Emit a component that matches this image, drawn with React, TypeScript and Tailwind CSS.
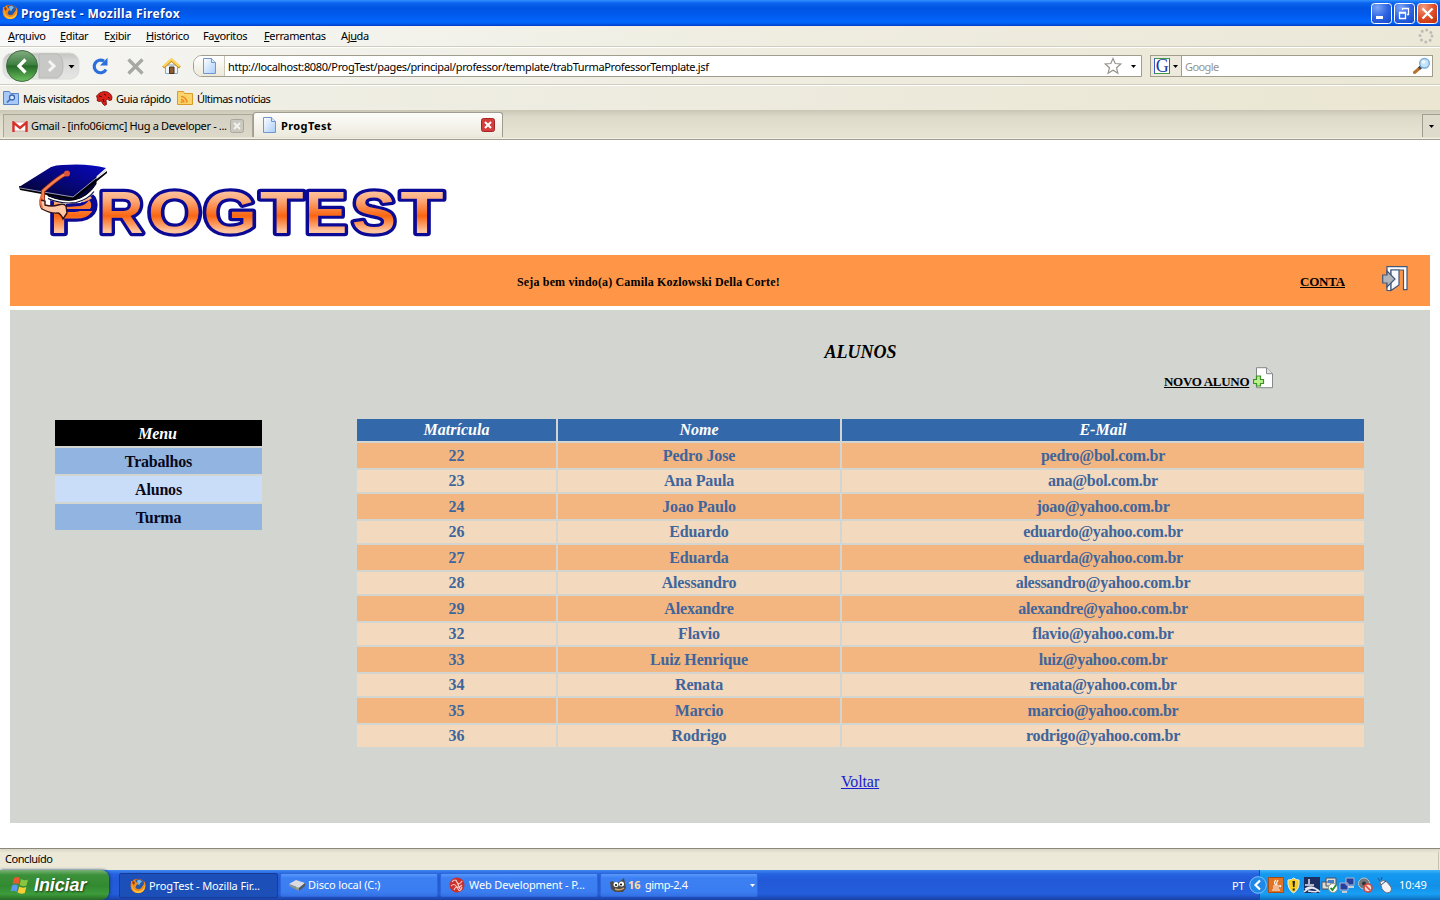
import React from 'react';

const students: [string, string, string][] = [
  ['22', 'Pedro Jose', 'pedro@bol.com.br'],
  ['23', 'Ana Paula', 'ana@bol.com.br'],
  ['24', 'Joao Paulo', 'joao@yahoo.com.br'],
  ['26', 'Eduardo', 'eduardo@yahoo.com.br'],
  ['27', 'Eduarda', 'eduarda@yahoo.com.br'],
  ['28', 'Alessandro', 'alessandro@yahoo.com.br'],
  ['29', 'Alexandre', 'alexandre@yahoo.com.br'],
  ['32', 'Flavio', 'flavio@yahoo.com.br'],
  ['33', 'Luiz Henrique', 'luiz@yahoo.com.br'],
  ['34', 'Renata', 'renata@yahoo.com.br'],
  ['35', 'Marcio', 'marcio@yahoo.com.br'],
  ['36', 'Rodrigo', 'rodrigo@yahoo.com.br'],
];

// Letter, left and right ink bounds in font units, then left and right edge in the logo.
const letters: [string, number, number, number, number][] = [
  ['P', 149, 1296, 54.5, 94],
  ['R', 150, 1467, 103, 143],
  ['O', 89, 1505, 151, 198.5],
  ['G', 89, 1466, 206.5, 252.5],
  ['T', 43, 1207, 261.5, 302],
  ['E', 149, 1275, 309.5, 344.5],
  ['S', 74, 1286, 354.5, 393.5],
  ['T', 43, 1207, 402, 442],
];

function Firefox() {
  return (
    <svg width="16" height="16" viewBox="0 0 16 16" className="shrink-0">
      <circle cx="8" cy="8" r="7.3" fill="#d95f0e" />
      <circle cx="8.8" cy="6.5" r="5.2" fill="#2459a8" />
      <path d="M7 2.5l3-.8 2 2-2 1.5-.5 2L7.500 6z" fill="#75b9e8" />
      <path d="M1 3l2 .3L4.500 1 6 4l2.500 1.500-2 1.500-1 2.500c1.500 2.500 5 2 6 0L14 6l.5-3c2 4 1 9-3 11.300C7 16.500 1 14 .7 8z" fill="#f58a1c" />
      <path d="M3 6c-1.500 4 2 8 6.500 7 3-.7 4.800-2.500 5.200-6 .8 5-2 7.800-6 8C3.500 15 .8 10 3 6z" fill="#fbc53b" />
      <path d="M2 4l1.500-1L5 5 3.500 7z" fill="#93390b" />
    </svg>
  );
}

function Page() {
  return (
    <svg width="13" height="16" viewBox="0 0 13 16" className="shrink-0">
      <defs>
        <linearGradient id="sheet" x2="1" y2="1">
          <stop stopColor="#fff" />
          <stop offset="1" stopColor="#a9cdfa" />
        </linearGradient>
      </defs>
      <path d="M.5.500h8l4 4v11H.500z" fill="url(#sheet)" stroke="#6f96cf" />
      <path d="M8.500.500v4h4" fill="#d5e6fb" stroke="#6f96cf" />
    </svg>
  );
}

function Caret({ white = false }: { white?: boolean }) {
  return (
    <svg width="5" height="3" viewBox="0 0 5 3" className="shrink-0">
      <path d="M0 0h5L2.500 3z" fill={white ? '#fff' : '#000'} />
    </svg>
  );
}

function TitleBar() {
  return (
    <div className="flex h-[26px] items-center bg-[linear-gradient(#3290ff_0,#0a64ee_3px,#0055e2_8px,#0058ec_14px,#0268ff_22px,#0059e8_24px,#003ac4_26px)] pl-[2px] pr-[2px]">
      <div className="-mt-[3px]"><Firefox /></div>
      <span className="ml-[3px] mt-px font-['Noto_Sans'] text-[12px] font-bold tracking-[0.38px] text-white [text-shadow:1px_1px_#0a2d86]">ProgTest - Mozilla Firefox</span>
      <div className="ml-auto flex gap-[2px]">
        <svg width="21" height="21" viewBox="0 0 21 21">
          <defs>
            <radialGradient id="blueBtn" cx=".3" cy=".2" r="1">
              <stop stopColor="#7ba5f6" /><stop offset=".5" stopColor="#2f66e4" /><stop offset="1" stopColor="#1448ca" />
            </radialGradient>
            <radialGradient id="redBtn" cx=".3" cy=".2" r="1">
              <stop stopColor="#f29a80" /><stop offset=".5" stopColor="#e0512b" /><stop offset="1" stopColor="#bd2e08" />
            </radialGradient>
          </defs>
          <rect x=".5" y=".5" width="20" height="20" rx="3" fill="url(#blueBtn)" stroke="#fff" />
          <path d="M5 13h7v3H5z" fill="#fff" />
        </svg>
        <svg width="21" height="21" viewBox="0 0 21 21">
          <rect x=".5" y=".5" width="20" height="20" rx="3" fill="url(#blueBtn)" stroke="#fff" />
          <path d="M8.500 7V5.500h6v6H13M8 5.500h7M5.500 9.500h6v6h-6zM5 10h7" fill="none" stroke="#fff" strokeWidth="1.300" />
        </svg>
        <svg width="21" height="21" viewBox="0 0 21 21">
          <rect x=".5" y=".5" width="20" height="20" rx="3" fill="url(#redBtn)" stroke="#fff" />
          <path d="M5.500 5.500l10 10m0-10l-10 10" stroke="#fff" strokeWidth="2.300" />
        </svg>
      </div>
    </div>
  );
}

function MenuBar() {
  return (
    <div className="flex h-[21px] items-center border-b border-[#d0cdbf] bg-[linear-gradient(90deg,#f7f8f8,#efede0_55%,#ebe8d8)] pl-[8px] pr-[6px] tracking-[-0.36px]">
      <span className="w-[52px]"><u>A</u>rquivo</span>
      <span className="w-[44px]"><u>E</u>ditar</span>
      <span className="w-[42px]">E<u>x</u>ibir</span>
      <span className="w-[57px]"><u>H</u>istórico</span>
      <span className="w-[61px]">Fa<u>v</u>oritos</span>
      <span className="w-[77px]"><u>F</u>erramentas</span>
      <span>Aj<u>u</u>da</span>
      <svg width="16" height="16" viewBox="0 0 16 16" className="ml-auto">
        <circle cx="8" cy="8" r="6" fill="none" stroke="#bdbbb3" strokeWidth="3" strokeDasharray="0 4.712" strokeLinecap="round" />
      </svg>
    </div>
  );
}

function NavBar() {
  return (
    <div className="flex h-[38px] items-center border-b border-t border-b-[#d0cdbf] border-t-white bg-[linear-gradient(90deg,#f5f5f3,#efede1_50%,#ebe7d5)]">
      <svg width="80" height="34" viewBox="0 0 80 34" className="ml-[2px] shrink-0">
        <defs>
          <linearGradient id="pill" x2="0" y2="1"><stop stopColor="#c2c2c0" /><stop offset=".3" stopColor="#d7d7d5" /><stop offset="1" stopColor="#e6e6e4" /></linearGradient>
          <linearGradient id="green" x2="0" y2="1"><stop stopColor="#84ad82" /><stop offset=".45" stopColor="#3f8142" /><stop offset=".5" stopColor="#256b28" /><stop offset="1" stopColor="#6cc15f" /></linearGradient>
        </defs>
        <rect x="1" y="4" width="76" height="26" rx="9" fill="url(#pill)" stroke="#dcdcd8" />
        <path d="M37 5h18q6 2 6 12t-6 12H37z" fill="#c8c8c6" stroke="#b8b8b6" />
        <path d="M47 12l5 5-5 5" fill="none" stroke="#f4f4f4" strokeWidth="3" />
        <path d="M66.500 16h6l-3 3.500z" />
        <circle cx="20" cy="17" r="15.500" fill="url(#green)" stroke="#426c43" />
        <path d="M23.500 10.500L17 17l6.500 6.500" fill="none" stroke="#fff" strokeWidth="3.200" />
      </svg>
      <svg width="18" height="18" viewBox="0 0 18 18" className="ml-[9px] shrink-0">
        <path d="M15 12.500A6.300 6.300 0 1 1 13 4.200" fill="none" stroke="#2a6fdb" strokeWidth="3.200" />
        <path d="M16.500.800v7.700H9z" fill="#2a6fdb" />
      </svg>
      <svg width="17" height="17" viewBox="0 0 17 17" className="ml-[18px] shrink-0">
        <path d="M1.500 1.500l14 14M15.500 1.500l-14 14" stroke="#a7a7a4" strokeWidth="3.200" />
      </svg>
      <svg width="19" height="18" viewBox="0 0 19 18" className="ml-[18px] shrink-0">
        <path d="M3.500 8h12v8.500h-12z" fill="#eef4fb" stroke="#8fa6c4" />
        <path d="M7.500 10h4.500v6.500H7.500z" fill="#8d5a32" stroke="#4d3220" />
        <path d="M1.200 10.500L9.500 3l8.300 7.500" fill="none" stroke="#c98c1c" strokeWidth="3" />
        <path d="M1.500 9.500L9.500 2.300 17.500 9.500" fill="none" stroke="#ffd760" strokeWidth="2.200" />
      </svg>
      <div className="ml-[12px] flex h-[22px] w-[949px] items-center rounded-l-[9px] border border-[#a09d8e] bg-white">
        <div className="flex h-full w-[31px] items-center rounded-l-[8px] border-r border-[#c9c6b6] bg-[linear-gradient(#fff,#ece9da)] pl-[9px]"><Page /></div>
        <span className="ml-[3px] mt-px tracking-[-0.363px]">http://localhost:8080/ProgTest/pages/principal/professor/template/trabTurmaProfessorTemplate.jsf</span>
        <svg width="18" height="18" viewBox="0 0 18 18" className="ml-auto shrink-0">
          <path d="M9 1.500l2.200 5 5.600.5-4.300 3.700 1.400 5.500L9 13.300l-4.900 2.900 1.400-5.500L1.200 7l5.600-.5z" fill="#fff" stroke="#96938c" strokeWidth="1.200" />
        </svg>
        <div className="ml-[9px] mr-[5px]"><Caret /></div>
      </div>
      <div className="ml-[8px] flex h-[22px] w-[283px] items-center border border-[#a09d8e] bg-white">
        <div className="flex h-full w-[31px] items-center gap-[3px] border-r border-[#a09d8e] bg-[#edeadd] pl-[3px]">
          <div className="flex h-[16px] w-[16px] shrink-0 items-center justify-center border border-b-[#3b9c45] border-l-[#3a59c9] border-r-[#c4342c] border-t-[#3b9c45] bg-white font-['Liberation_Serif'] text-[18px] leading-none text-[#1a3ba5]">G</div>
          <Caret />
        </div>
        <span className="ml-[3px] mt-px tracking-[-0.6px] text-[#96948c]">Google</span>
        <svg width="18" height="18" viewBox="0 0 18 18" className="ml-auto mr-[1px]">
          <path d="M1.500 15.500L8 10" stroke="#b87230" strokeWidth="3" strokeLinecap="round" />
          <path d="M6 11.500l2-1.700" stroke="#40464f" strokeWidth="3" />
          <circle cx="11.500" cy="6.300" r="4.800" fill="#c4e4fb" stroke="#7badd6" strokeWidth="1.500" />
          <circle cx="10.500" cy="5" r="1.800" fill="#f2faff" />
        </svg>
      </div>
    </div>
  );
}

function Bookmarks() {
  return (
    <div className="flex h-[25px] items-center border-t border-white bg-[linear-gradient(90deg,#f1f0e8,#edebde_50%,#eae6d2)] pl-[3px] tracking-[-0.46px]">
      <svg width="16" height="14" viewBox="0 0 16 14">
        <path d="M.5.500h6l1 2h8v11H.500z" fill="#a8c9f7" stroke="#5b84c8" />
        <circle cx="9" cy="6.500" r="2.500" fill="#dcebfd" stroke="#3c68b4" strokeWidth="1.300" />
        <path d="M7 8.500l-3 3" stroke="#3c68b4" strokeWidth="1.600" />
      </svg>
      <span className="ml-[4px] mt-[2px] w-[73px]">Mais visitados</span>
      <svg width="17" height="15" viewBox="0 0 17 15">
        <path d="M.5 5l3-3 4-1.500 4 .5 3 2 1.500 3-.5 3-2.500.5-1.500-1.500-1.500 1.500.5 4-2 1-2-2-1-2.500-2.500.5-2-1L1.500 8z" fill="#d81f18" stroke="#6b0a08" strokeWidth=".8" />
        <path d="M3 5l2.500.5M8 3l2 1.500M7 8l1 3M12 6l1.500 1.500" stroke="#3b0504" />
      </svg>
      <span className="ml-[3px] mt-[2px] w-[61px] tracking-[-0.5px]">Guia rápido</span>
      <svg width="16" height="14" viewBox="0 0 16 14">
        <path d="M.5.500h6l1 2h8v11H.500z" fill="#fbd36b" stroke="#d99c28" />
        <path d="M4 5.500q5 0 6 6M4 8.500q2.500 0 3 3" fill="none" stroke="#f08a1c" strokeWidth="1.600" />
        <circle cx="4.700" cy="11" r="1" fill="#f08a1c" />
      </svg>
      <span className="ml-[4px] mt-[2px] tracking-[-0.55px]">Últimas notícias</span>
    </div>
  );
}

function Tabs() {
  return (
    <div className="flex h-[30px] items-end border-b border-[#a09d90] bg-[linear-gradient(#c9c6b5,#dddac9_7px,#e6e3d3_24px,#e6e3d3)]">
      <div className="flex h-full grow items-end border-b border-[#f1efe6] pb-px pl-[3px]">
        <div className="flex h-[23px] w-[250px] items-center border border-b-0 border-[#a9a698] bg-[linear-gradient(#d3d0c1,#dcd9ca)] pl-[8px] pr-[8px]">
          <svg width="16" height="11" viewBox="0 0 16 11">
            <path d="M1 1h14v9H1z" fill="#fff" stroke="#d9aaa5" />
            <path d="M1.500 11V1.500L8 7l6.500-5.500V11" fill="none" stroke="#d6322b" strokeWidth="2.400" />
          </svg>
          <span className="ml-[3px] tracking-[-0.35px]">Gmail - [info06icmc] Hug a Developer - ...</span>
          <svg width="14" height="14" viewBox="0 0 14 14" className="ml-auto shrink-0">
            <rect x=".5" y=".5" width="13" height="13" rx="2" fill="#cbc9bf" stroke="#aaa89e" />
            <path d="M4 4l6 6m0-6l-6 6" stroke="#f4f3ee" strokeWidth="1.800" />
          </svg>
        </div>
        <div className="flex h-[25px] w-[250px] items-center rounded-t-[3px] border border-b-0 border-[#a09d90] bg-[linear-gradient(#fdfdfb,#ece9dc)] pl-[9px] pr-[7px]">
          <Page />
          <span className="ml-[5px] mt-px text-[11px] font-bold tracking-[0.4px]">ProgTest</span>
          <svg width="14" height="14" viewBox="0 0 14 14" className="ml-auto">
            <rect x=".5" y=".5" width="13" height="13" rx="2" fill="#d53c3c" stroke="#a32525" />
            <path d="M4 4l6 6m0-6l-6 6" stroke="#fff" strokeWidth="2" />
          </svg>
        </div>
        <div className="ml-auto flex h-[23px] w-[18px] items-center justify-center border border-b-0 border-r-0 border-[#a09d90] bg-[#dedbcd]"><Caret /></div>
      </div>
    </div>
  );
}

function Logo() {
  const size = 59.6;
  const unit = size / 2048;
  return (
    <svg width="480" height="112" viewBox="0 140 480 112" className="block">
      <defs>
        <linearGradient id="ink" gradientUnits="userSpaceOnUse" x1="0" x2="0" y1="-42" y2="0">
          <stop stopColor="#ffc4a0" />
          <stop offset=".25" stopColor="#fca674" />
          <stop offset=".6" stopColor="#fa6511" />
          <stop offset=".95" stopColor="#ffc29a" />
        </linearGradient>
        <linearGradient id="cap" x1="0" y1="1" x2="1" y2="0">
          <stop stopColor="#020220" /><stop offset=".4" stopColor="#06066a" /><stop offset="1" stopColor="#0808c4" />
        </linearGradient>
      </defs>
      {letters.map(([ch, l, r, x1, x2], i) => {
        const s = (x2 - x1) / ((r - l) * unit);
        return (
          <text key={i} transform={`translate(${x1 - l * unit * s} 232.700) scale(${s} 1)`} fontFamily="Liberation Sans" fontSize={size} fontWeight="700" fill="url(#ink)" stroke="#0a0a95" strokeWidth="6.400" strokeLinejoin="round" paintOrder="stroke">{ch}</text>
        );
      })}
      <path d="M48 186l50-8v10l-3 5-16 11-14 1-18-6z" fill="#fff" />
      <path d="M66 204q8-1 15-1 8-2 14-7l2 6-4 9H66z" fill="#0a0a95" />
      <path d="M66 207l14-1q6-1 9-6 4 4 1 9H66z" fill="#fb7a30" />
      <path d="M48 196q14 6 26 4 14-3 22-16v-8l-48 12z" fill="#05053c" stroke="#000" />
      <path d="M48 197q14 6 28 4 12-3 18-11" fill="none" stroke="#fff" strokeWidth=".9" />
      <path d="M48 198.500q14 6 28 4 12-3 18-11" fill="none" stroke="#0a0a30" strokeWidth="1.200" />
      <path d="M20 190l54 10 33-27v-2l-34 26-54-11z" fill="#000" />
      <path d="M19 187L51 167q5-2 11-2 26-2 44 3L73 197q-27-3-54-10z" fill="url(#cap)" />
      <path d="M20 188l53 9 33-27" fill="none" stroke="#b8b8dc" strokeWidth=".8" />
      <path d="M66 174q-6 2-23 17v9" fill="none" stroke="#8d250e" strokeWidth="4" />
      <path d="M66 174q-6 2-23 17v9" fill="none" stroke="#f68255" strokeWidth="2.400" />
      <circle cx="67" cy="173.500" r="3" fill="#de5537" />
      <path d="M41 200l4 1v4q7 2 13 0 6-2 8 1l1 7-4 6q-2-5-5-6-7 1-16-4-3-4-1-9z" fill="#ffc7a5" stroke="#311" strokeWidth="1.400" />
      <path d="M42 194l-2 7 2 7" fill="none" stroke="#e86b3e" strokeWidth="2" />
    </svg>
  );
}

function Sidebar() {
  return (
    <div className="ml-[45px] mt-[110px] flex w-[207px] flex-col gap-[2px] text-center text-[16px] font-bold leading-[27px] tracking-[-0.2px] text-[#08081c]">
      <div className="h-[26px] bg-black pr-[2px] italic text-white">Menu</div>
      <div className="h-[26px] bg-[#91b4e1]">Trabalhos</div>
      <div className="h-[26px] bg-[#c9ddf8]">Alunos</div>
      <div className="h-[26px] bg-[#91b4e1]">Turma</div>
    </div>
  );
}

function StudentTable() {
  return (
    <div className="mt-[28px] flex flex-col gap-[2px] text-center text-[16px] font-bold text-[#3e659c]">
      <div className="grid h-[22px] grid-cols-[199px_282px_522px] gap-[2px] italic leading-[22px] text-white">
        <div className="bg-[#3368aa]">Matrícula</div>
        <div className="bg-[#3368aa]">Nome</div>
        <div className="bg-[#3368aa]">E-Mail</div>
      </div>
      {students.map(([id, name, mail], i) => {
        const bg = i % 2 ? 'bg-[#f3d9bd]' : 'bg-[#f4b680]';
        return (
          <div key={id} className={i % 2 ? 'grid h-[22px] grid-cols-[199px_282px_522px] gap-[2px] leading-[22px]' : 'grid h-[25px] grid-cols-[199px_282px_522px] gap-[2px] leading-[25px]'}>
            <div className={bg}>{id}</div>
            <div className={`${bg} tracking-[-0.15px]`}>{name}</div>
            <div className={`${bg} tracking-[-0.27px]`}>{mail}</div>
          </div>
        );
      })}
    </div>
  );
}

function Site() {
  return (
    <div className="h-[708px] bg-white font-['Liberation_Serif'] text-black">
      <div className="h-[115px]"><Logo /></div>
      <div className="ml-[10px] flex h-[51px] w-[1420px] items-center bg-[#ff9547] text-[12px] font-bold">
        <span className="ml-[507px] mt-[2px] w-[783px] tracking-[0.16px]">Seja bem vindo(a) Camila Kozlowski Della Corte!</span>
        <span className="mt-[2px] w-[82px] text-[13px] tracking-[-0.2px]"><u>CONTA</u></span>
        <svg width="26" height="26" viewBox="0 0 26 26" className="-mt-[4px]">
          <path d="M5 .700h20v23h-3.500V4H9v20.500H5z" fill="#fff" stroke="#41577b" strokeWidth="1.200" />
          <path d="M9 4h8v15l-8 5.500z" fill="#f8fafe" stroke="#41577b" strokeWidth="1.200" />
          <path d="M.700 9H5V5l8 8L5 21v-4H.700z" fill="#b1b5ba" stroke="#41577b" strokeWidth="1.200" />
        </svg>
      </div>
      <div className="ml-[10px] mt-[4px] flex h-[513px] w-[1420px] bg-[#d3d5d1]">
        <Sidebar />
        <div className="ml-[95px] w-[1007px]">
          <div className="mt-[32px] text-center text-[18px] font-bold italic leading-[20px]">ALUNOS</div>
          <div className="mt-[5px] flex h-[24px] items-center pl-[807px] text-[13px] font-bold">
            <span className="mt-[5px] w-[89px] whitespace-nowrap tracking-[-0.3px]"><u>NOVO ALUNO</u></span>
            <svg width="21" height="22" viewBox="0 0 21 22" className="-mt-[2px]">
              <path d="M3.500.700H13.500l6 6v14h-16z" fill="#fff" stroke="#85878a" />
              <path d="M13.500.700v6h6" fill="#e3e3e3" stroke="#85878a" />
              <path d="M3.500 9h4v3.500h3v4h-3V19h-4v-2.500h-3v-4h3z" fill="#b8f08a" stroke="#3d8f27" strokeWidth="1.200" />
            </svg>
          </div>
          <StudentTable />
          <div className="mt-[25px] pr-px text-center text-[16px] leading-[20px] tracking-[-0.1px] text-[#1c1ccd] underline">Voltar</div>
        </div>
      </div>
    </div>
  );
}

const taskClass = 'flex h-[24px] w-[158px] items-center rounded-[2px] border border-[#2f67d8] bg-[linear-gradient(#5a98fb,#3c80f4_4px,#3a7df0_18px,#3471e4)] px-[8px] text-white';

function Taskbar() {
  return (
    <div className="flex h-[30px] bg-[linear-gradient(#3d87f0_0,#2663e0_4px,#2259d8_10px,#245edb_24px,#1941a5)] tracking-[-0.12px] text-white">
      <div className="flex h-full w-[109px] items-center rounded-r-[8px] bg-[linear-gradient(#7ab277_0,#3b9139_5px,#328a31_16px,#3d9c3b_24px,#256a26)] pl-[10px] shadow-[1px_0_3px_#123b70]">
        <svg width="20" height="19" viewBox="0 0 20 19">
          <path d="M4 2q4-2 6 .5L8.500 8.500Q6 6.500 2.500 8z" fill="#ea5a2c" />
          <path d="M11 3q3 2 7 .5l-1.500 6Q13 11 9.500 9z" fill="#89c540" />
          <path d="M2 9.500q4-2 6 .5l-1.500 6Q4 14 .500 15.500z" fill="#5b98ee" />
          <path d="M9.300 10.500q3 2 7 .5l-1.500 6Q11 18.500 7.500 16.500z" fill="#f8cf36" />
        </svg>
        <span className="ml-[4px] font-['Liberation_Sans'] text-[18px] font-bold italic leading-none tracking-[-0.1px] [text-shadow:1px_1px_2px_#173d17]">Iniciar</span>
      </div>
      <div className="ml-[10px] mt-[3px] flex gap-[2px]">
        <div className="flex h-[25px] w-[159px] items-center rounded-[2px] border border-[#163c98] bg-[#1c4fb8] pl-[10px]">
          <Firefox />
          <span className="ml-[3px]">ProgTest - Mozilla Fir...</span>
        </div>
        <div className={taskClass}>
          <svg width="16" height="12" viewBox="0 0 16 12">
            <path d="M0 5l7-4 9 3-6 5z" fill="#d9dbdf" /><path d="M0 5l10 4v3L0 7z" fill="#8d9094" /><path d="M10 9l6-5v3l-6 5z" fill="#53575d" /><circle cx="8" cy="8.800" r=".8" fill="#77e66b" />
          </svg>
          <span className="ml-[3px]">Disco local (C:)</span>
        </div>
        <div className={taskClass}>
          <svg width="16" height="16" viewBox="0 0 16 16">
            <circle cx="8" cy="8" r="7.500" fill="#cc2f2b" />
            <path d="M3 5q3-4 5 0t5-1M2 9q3-3 5 0t6-1M5 13q2-5 4-1t4-2M7 3l4 9" fill="none" stroke="#f8c7c2" strokeWidth="1.200" />
          </svg>
          <span className="ml-[4px]">Web Development - P...</span>
        </div>
        <div className={taskClass}>
          <svg width="18" height="15" viewBox="0 0 18 15" className="shrink-0">
            <path d="M1 4l3-1 1 2 5-1 5-4 1 5 1 5-3 4H6L2 11z" fill="#4c4a47" />
            <circle cx="7" cy="6.500" r="2.500" fill="#fff" /><circle cx="12.500" cy="6" r="2.500" fill="#fff" />
            <circle cx="7" cy="7" r="1" /><circle cx="12" cy="6.500" r="1" /><path d="M6 11q5 2 9-1" stroke="#cda36d" strokeWidth="1.500" fill="none" />
          </svg>
          <span className="ml-px w-[17px] font-bold text-[#ffdc9c]">16</span>
          <span className="tracking-[-0.4px]">gimp-2.4</span>
          <div className="-mr-[6px] ml-auto"><Caret white /></div>
        </div>
      </div>
      <span className="ml-auto mt-[9px] w-[27px]">PT</span>
      <div className="-mr-px flex h-full w-[182px] items-center border-l border-[#0b55b7] bg-[linear-gradient(#42b3f7_0,#149af0_4px,#1290e8_16px,#18a0f4_24px,#0d6cbd)]">
        <svg width="18" height="18" viewBox="0 0 18 18" className="-ml-[11px] shrink-0">
          <circle cx="9" cy="9" r="8.300" fill="#2088e6" stroke="#7cc4fb" /><path d="M11 4.500L6.500 9l4.500 4.500" fill="none" stroke="#fff" strokeWidth="2.200" />
        </svg>
        <svg width="126" height="18" viewBox="0 0 126 18" className="ml-[1px] shrink-0">
          <rect x=".5" y="1.500" width="15" height="15" fill="#e37324" stroke="#a64e17" />
          <path d="M8 4q-3 3 0 5M10 4q-2 3-1 5M5 10h6q3-1 1 1M5 12h6M4 14h8" fill="none" stroke="#fff" strokeWidth="1.100" />
          <path d="M20 4q4 0 5.500-2Q28 4 31 4q1 9-5.500 13Q19 13 20 4z" fill="#fbd01c" stroke="#e9ebec" /><path d="M24.500 5h2.500l-.5 6h-1.500zM24.700 12.500h2v2h-2z" fill="#222" />
          <path d="M36 1h16v16H36z" fill="#1d2f60" /><path d="M41 3v5M37 9h9M37 13q6-4 11 0t-8 2M36 16q8-8 16 0" fill="none" stroke="#e5e9f4" strokeWidth="1.500" />
          <path d="M58 2h10v8H58zM54 6h9v7h-9z" fill="#dcdbd2" stroke="#4b5162" /><path d="M60 4h6v3h-6z" fill="#477bc2" /><circle cx="65" cy="12" r="4.500" fill="#fff" stroke="#8b9388" /><path d="M62.500 12l2 2 3.500-5" fill="none" stroke="#258c2a" strokeWidth="1.800" />
          <path d="M78 2h8v7h-8zM72 7h8v7h-8z" fill="#263f9f" stroke="#aeb7d0" /><path d="M80 11h6M74 16h5" stroke="#c5cbd8" strokeWidth="2" />
          <circle cx="96" cy="7.500" r="5.500" fill="#74777b" stroke="#bfc1c2" /><circle cx="96" cy="7.500" r="2" fill="#333" /><circle cx="100" cy="12" r="4" fill="#f4d8d3" stroke="#d8473b" strokeWidth="1.600" /><path d="M97.500 9.500l5 5" stroke="#d8473b" strokeWidth="1.500" />
          <path d="M112 6q3-3 7 0l4 5q2 5-4 6-3-1-5-4z" fill="#f3f3f4" stroke="#6e6d7c" /><path d="M113 9l5-4M110 2l2 3M114 1l-1 3" stroke="#344b7c" />
        </svg>
        <span className="ml-[5px] tracking-[-0.1px]">10:49</span>
      </div>
    </div>
  );
}

export default function App() {
  return (
    <div className="h-[900px] w-[1440px] overflow-hidden whitespace-nowrap bg-white font-['Noto_Sans',sans-serif] text-[11px] leading-[14px] tracking-[-0.3px] text-black">
      <TitleBar />
      <MenuBar />
      <NavBar />
      <Bookmarks />
      <Tabs />
      <div className="tracking-normal"><Site /></div>
      <div className="flex h-[22px] items-start border-t border-[#8b887b] bg-[linear-gradient(#d9d6c7,#ece9d8_4px,#ece9d8)] pl-[5px] pt-[3px]">
        <span className="grow tracking-[-0.45px]">Concluído</span>
        <div className="mr-px h-[18px] w-px bg-[#c5c2b2]" />
      </div>
      <Taskbar />
    </div>
  );
}
